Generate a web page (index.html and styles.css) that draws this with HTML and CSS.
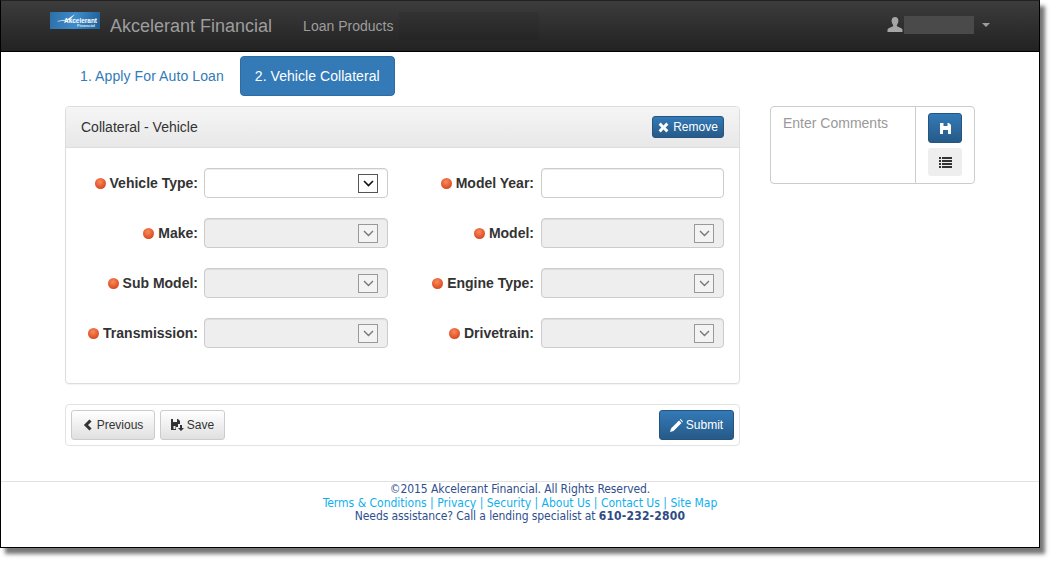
FILE: index.html
```html
<!DOCTYPE html>
<html lang="en">
<head>
<meta charset="utf-8">
<title>Akcelerant Financial</title>
<link rel="stylesheet" href="styles.css">
</head>
<body>
<div class="frame">
  <header class="navbar">
    <div class="logo">
      <svg width="50" height="17" viewBox="0 0 50 17"><path d="M7 9 L17 7.500 L25 2 L20 8 L8 9.500 Z" fill="#fff" opacity=".9"/><text class="logo-a" x="14" y="11" textLength="33" lengthAdjust="spacingAndGlyphs">Akcelerant</text><text class="logo-b" x="27" y="15" textLength="18" lengthAdjust="spacingAndGlyphs">Financial</text></svg>
    </div>
    <a class="brand">Akcelerant Financial</a>
    <a class="nav-link">Loan Products</a>
    <div class="redact-nav"></div>
    <div class="user">
      <svg class="user-icon" width="16" height="16" viewBox="0 0 16 16"><path d="M8 0C5.800 0 4.600 1.600 4.600 3.800c0 1.600.7 3.200 1.500 4.100v1.300C4 10 1 11 .5 12.600V15h15v-2.400C15 11 12 10 9.900 9.200V7.900c.8-.9 1.500-2.500 1.500-4.100C11.400 1.600 10.200 0 8 0z" fill="#a6a6a6"/></svg>
      <div class="redact-user"></div>
      <span class="caret"></span>
    </div>
  </header>

  <nav class="tabs">
    <a class="tab">1. Apply For Auto Loan</a>
    <a class="tab active">2. Vehicle Collateral</a>
  </nav>

  <main class="content">
    <div class="left">
      <section class="panel">
        <div class="panel-head">
          <span>Collateral - Vehicle</span>
          <button class="btn primary small">
            <svg width="11" height="11" viewBox="0 0 11 11"><path d="M2.700.6 5.500 3.400 8.300.6 10.400 2.700 7.600 5.500 10.400 8.300 8.300 10.400 5.500 7.600 2.700 10.400.6 8.300 3.400 5.500.6 2.700Z" fill="#fff"/></svg>
            Remove
          </button>
        </div>
        <div class="form">
          <label class="lbl first"><i class="dot"></i>Vehicle Type:</label>
          <div class="field"><span class="arrow"><svg width="11" height="7" viewBox="0 0 11 7"><path d="M1 1l4.500 4.500L10 1" fill="none" stroke="#111" stroke-width="1.600"/></svg></span></div>
          <label class="lbl second"><i class="dot"></i>Model Year:</label>
          <div class="field narrow"></div>

          <label class="lbl first"><i class="dot"></i>Make:</label>
          <div class="field off"><span class="arrow"><svg width="11" height="7" viewBox="0 0 11 7"><path d="M1 1l4.500 4.500L10 1" fill="none" stroke="#777" stroke-width="1.400"/></svg></span></div>
          <label class="lbl second"><i class="dot"></i>Model:</label>
          <div class="field off"><span class="arrow"><svg width="11" height="7" viewBox="0 0 11 7"><path d="M1 1l4.500 4.500L10 1" fill="none" stroke="#777" stroke-width="1.400"/></svg></span></div>

          <label class="lbl first"><i class="dot"></i>Sub Model:</label>
          <div class="field off"><span class="arrow"><svg width="11" height="7" viewBox="0 0 11 7"><path d="M1 1l4.500 4.500L10 1" fill="none" stroke="#777" stroke-width="1.400"/></svg></span></div>
          <label class="lbl second"><i class="dot"></i>Engine Type:</label>
          <div class="field off"><span class="arrow"><svg width="11" height="7" viewBox="0 0 11 7"><path d="M1 1l4.500 4.500L10 1" fill="none" stroke="#777" stroke-width="1.400"/></svg></span></div>

          <label class="lbl first"><i class="dot"></i>Transmission:</label>
          <div class="field off"><span class="arrow"><svg width="11" height="7" viewBox="0 0 11 7"><path d="M1 1l4.500 4.500L10 1" fill="none" stroke="#777" stroke-width="1.400"/></svg></span></div>
          <label class="lbl second"><i class="dot"></i>Drivetrain:</label>
          <div class="field off"><span class="arrow"><svg width="11" height="7" viewBox="0 0 11 7"><path d="M1 1l4.500 4.500L10 1" fill="none" stroke="#777" stroke-width="1.400"/></svg></span></div>
        </div>
      </section>

      <div class="actions">
        <button class="btn plain">
          <svg width="10" height="12" viewBox="0 0 10 12"><path d="M7.500 1.500 3 6l4.500 4.500" fill="none" stroke="#333" stroke-width="3"/></svg>
          Previous
        </button>
        <button class="btn plain">
          <svg width="13" height="12" viewBox="0 0 13 12"><path d="M0 0h2v3h4V0h1l2 2v3H7v3H5v3H0z M2.500 7v3h2V7z" fill="#333" fill-rule="evenodd"/><path d="M9 6h2v3h2l-3 3-3-3h2z" fill="#333"/></svg>
          Save
        </button>
        <button class="btn primary submit">
          <svg width="13" height="13" viewBox="0 0 13 13"><path d="M0 13l1-3.500L9 1.500l2.500 2.500L3.500 12z M9.800.7l.8-.7 2.400 2.400-.7.8z" fill="#fff"/></svg>
          Submit
        </button>
      </div>
    </div>

    <aside class="comments">
      <div class="comment-text">Enter Comments</div>
      <div class="comment-btns">
        <button class="btn primary icon">
          <svg width="11" height="11" viewBox="0 0 11 11"><path fill-rule="evenodd" d="M0 0h3.500v3h4V0h1.500l2 2v9H0z M3 7v4h5V7z" fill="#fff"/></svg>
        </button>
        <button class="btn list-btn">
          <svg width="13" height="11" viewBox="0 0 13 11"><path d="M0 0h2v2H0zM3 0h10v2H3zM0 3h2v2H0zM3 3h10v2H3zM0 6h2v2H0zM3 6h10v2H3zM0 9h2v2H0zM3 9h10v2H3z" fill="#333"/></svg>
        </button>
      </div>
    </aside>
  </main>

  <footer class="footer">
    <div class="tight">©2015 Akcelerant Financial. All Rights Reserved.</div>
    <div class="links"><a>Terms &amp; Conditions</a> | <a>Privacy</a> | <a>Security</a> | <a>About Us</a> | <a>Contact Us</a> | <a>Site Map</a></div>
    <div class="tight">Needs assistance? Call a lending specialist at <b>610-232-2800</b></div>
  </footer>
</div>
</body>
</html>
```
FILE: styles.css
```css
* { box-sizing: border-box; }
html, body { margin: 0; padding: 0; background: #fff; }
body { font-family: "Liberation Sans", Arial, sans-serif; font-size: 14px; color: #333; width: 1055px; height: 564px; overflow: hidden; }

.frame {
  width: 1040px; height: 548px;
  border: 1px solid #000;
  border-top-color: #222;
  box-shadow: 5px 6px 4px #777;
  background: #fff;
  display: flex; flex-direction: column;
}

.navbar {
  height: 51px; flex: none;
  background: linear-gradient(#3c3c3c, #222);
  border-bottom: 1px solid #000;
  display: flex; align-items: flex-start;
  padding-left: 49px;
}
.logo { width: 50px; height: 17px; margin-top: 11px; background: linear-gradient(100deg, #2d6fa8, #3f8ccb 50%, #1f5f96); display: flex; }
.logo-a { font: 700 7px "Liberation Sans", sans-serif; fill: #fff; }
.logo-b { font: 700 4px "Liberation Sans", sans-serif; fill: #dcebf7; }
.brand { font-size: 18px; color: #9d9d9d; margin: 15px 0 0 10px; line-height: 20px; }
.nav-link { color: #9d9d9d; margin: 15px 0 0 31px; line-height: 20px; }
.redact-nav { width: 140px; height: 28px; margin: 11px 0 0 6px; background: rgba(0,0,0,.06); }
.user { margin-left: auto; margin-right: 49px; display: flex; align-items: center; height: 18px; margin-top: 15px; }
.user-icon { margin-right: 1px; }
.redact-user { width: 70px; height: 18px; background: #4a4a4a; }
.caret { margin-left: 8px; border-top: 4px solid #9d9d9d; border-left: 4px solid transparent; border-right: 4px solid transparent; }

.tabs { display: flex; gap: 1px; padding: 4px 0 0 64px; height: 50px; flex: none; letter-spacing: .1px; }
.tab { height: 40px; padding: 0 15px; line-height: 40px; color: #337ab7; border-radius: 4px; }
.tab.active { background: #337ab7; color: #fff; border: 1px solid #2e6da4; line-height: 38px; padding: 0 14px; letter-spacing: .05px; }

.content { display: flex; padding: 4px 0 0 64px; align-items: flex-start; flex: 1; }
.left { width: 675px; flex: none; }

.panel { height: 278px; border: 1px solid #ddd; border-radius: 4px; box-shadow: 0 1px 1px rgba(0,0,0,.05); }
.panel-head {
  height: 41px; border-bottom: 1px solid #ddd; border-radius: 3px 3px 0 0;
  background: linear-gradient(#f5f5f5, #e8e8e8);
  display: flex; align-items: center; justify-content: space-between;
  padding: 0 15px;
}

.btn { font-family: inherit; display: inline-flex; align-items: center; justify-content: center; gap: 4px; border-radius: 3px; padding: 0; cursor: pointer; font-size: 12px; }
.primary { color: #fff; background: linear-gradient(#337ab7, #265a88); border: 1px solid #245580; }
.small { width: 72px; height: 22px; }
.plain { height: 30px; color: #333; border: 1px solid #ccc; background: linear-gradient(#fff, #e0e0e0); }
.plain:first-child { width: 84px; }
.plain:nth-child(2) { width: 65px; gap: 3px; }
.submit { height: 30px; width: 75px; margin-left: auto; gap: 3px; }

.form {
  display: grid;
  grid-template-columns: 138px 184px 153px 183px;
  grid-auto-rows: 30px; row-gap: 20px;
  padding-top: 20px;
}
.lbl { display: flex; align-items: center; justify-content: flex-end; font-weight: 700; color: #333; }
.first { padding-right: 6px; }
.second { padding-right: 7px; }
.dot { width: 11px; height: 11px; margin-right: 4px; border-radius: 50%; background: radial-gradient(circle at 45% 35%, #f98a5c, #e2552a 60%, #b53c17); }
.field { height: 30px; border: 1px solid #ccc; border-radius: 4px; background: #fff; position: relative; box-shadow: inset 0 1px 1px rgba(0,0,0,.075); }
.off { background: #eee; }
.arrow { position: absolute; top: 5px; right: 9px; width: 20px; height: 19px; border: 1px solid #555; background: #fff; display: flex; align-items: center; justify-content: center; }
.off .arrow { border-color: #999; background: #f3f3f3; }

.actions { height: 42px; margin-top: 20px; border: 1px solid #e3e3e3; border-radius: 4px; display: flex; align-items: center; gap: 5px; padding: 0 5px; }

.comments { width: 205px; height: 78px; margin-left: 30px; border: 1px solid #ccc; border-radius: 4px; display: flex; }
.comment-text { width: 145px; padding: 8px 12px; color: #999; border-right: 1px solid #ccc; line-height: 17px; }
.comment-btns { flex: 1; display: flex; flex-direction: column; align-items: center; gap: 5px; padding: 6px 0 0 0; }
.icon { width: 34px; height: 30px; }
.list-btn { width: 34px; height: 28px; background: #eee; border: 0; }

.footer {
  flex: none; height: 66px;
  border-top: 1px solid #e2e2e2;
  text-align: center;
  font-family: "DejaVu Sans", sans-serif; font-stretch: condensed;
  font-size: 12px; line-height: 13.500px; color: #2f4f8f;
  padding: 1px 0 0;
}
.tight { letter-spacing: -.1px; }
.links { color: #0fb0ee; }
.footer b { color: #2f4a85; letter-spacing: .2px; }
```
